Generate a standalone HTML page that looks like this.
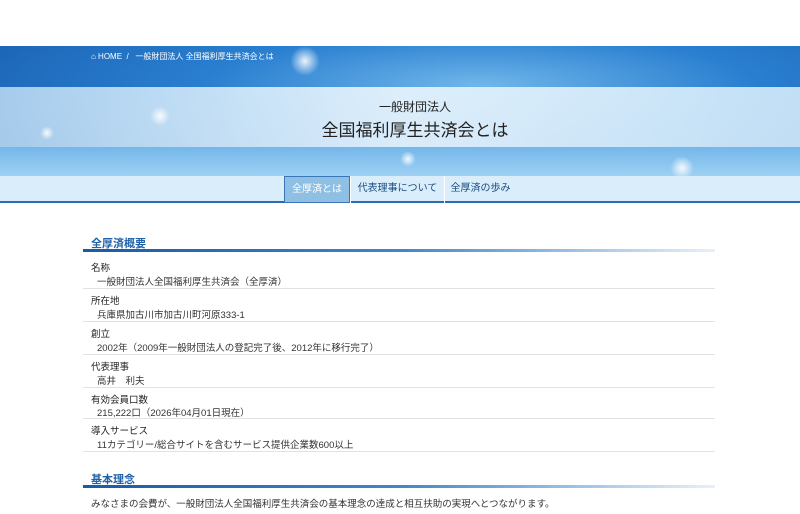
<!DOCTYPE html>
<html><head><meta charset="utf-8"><style>
*{margin:0;padding:0;box-sizing:border-box}
body{width:800px;height:514px;overflow:hidden;background:#fff;font-family:"Liberation Sans","Noto Sans CJK JP",sans-serif;color:#222}
.hero{position:absolute;top:46px;left:0;width:800px;height:130px;background:radial-gradient(ellipse at 60% 30%,#6fb6ea 0%,#2a7fd0 40%,#1556a8 100%);overflow:hidden}
.hero .band{position:absolute;top:41px;left:0;width:800px;height:60px;background:linear-gradient(90deg,rgba(200,228,248,.8),rgba(228,242,252,.95) 50%,rgba(210,234,250,.9))}
.hero .low{position:absolute;top:101px;left:0;width:800px;height:29px;background:linear-gradient(180deg,#74b7ea,#9ed0f3)}
.dot{position:absolute;border-radius:50%;background:radial-gradient(circle,rgba(255,255,255,.9),rgba(255,255,255,0) 70%)}
.bc{position:absolute;top:5px;left:91px;font-size:8px;color:#fff}
.t1{position:absolute;top:52px;left:0;width:800px;text-align:center;font-size:12px;color:#222;padding-left:30px}
.t2{position:absolute;top:70px;left:0;width:800px;text-align:center;font-size:17px;color:#222;padding-left:30px}
.nav{position:absolute;top:176px;left:0;width:800px;height:27px;background:#d9edfa;border-bottom:2px solid #2a6db4}
.nav div{position:absolute;top:0;height:27px;line-height:25px;font-size:10px;color:#1c4c80;text-align:center;border-left:1px solid #fff}
.nav .on{background:#8fc0e4;color:#fff;border:1px solid #3a76b8}
h2{position:absolute;left:91px;font-size:11px;color:#1f62a8;font-weight:bold}
.ul{position:absolute;left:83px;width:632px;height:3px;background:linear-gradient(90deg,#1a5aa8,#3f86cc 50%,#e8f0f8)}
.row{position:absolute;left:83px;width:632px;border-bottom:1px solid #e2e2e2;font-size:9.5px}
.row b{position:absolute;left:8px;top:4px;font-weight:normal;color:#222}
.row span{position:absolute;left:14px;top:18px;color:#333}
</style></head><body>
<div class="hero">
<div class="band"></div><div class="low"></div>
<div class="dot" style="left:290px;top:0;width:30px;height:30px"></div>
<div class="dot" style="left:150px;top:60px;width:20px;height:20px"></div>
<div class="dot" style="left:670px;top:110px;width:24px;height:24px"></div>
<div class="dot" style="left:400px;top:105px;width:16px;height:16px"></div>
<div class="dot" style="left:40px;top:80px;width:14px;height:14px"></div>
<div class="bc">⌂ HOME &nbsp;/ &nbsp; 一般財団法人 全国福利厚生共済会とは</div>
<div class="t1">一般財団法人</div>
<div class="t2">全国福利厚生共済会とは</div>
</div>
<div class="nav">
<div class="on" style="left:284px;width:66px">全厚済とは</div>
<div style="left:350px;width:94px">代表理事について</div>
<div style="left:444px;width:72px">全厚済の歩み</div>
</div>
<h2 style="top:235px">全厚済概要</h2>
<div class="ul" style="top:249px"></div>
<div class="row" style="top:256px;height:33px"><b>名称</b><span>一般財団法人全国福利厚生共済会（全厚済）</span></div>
<div class="row" style="top:289px;height:33px"><b>所在地</b><span>兵庫県加古川市加古川町河原333-1</span></div>
<div class="row" style="top:322px;height:33px"><b>創立</b><span>2002年（2009年一般財団法人の登記完了後、2012年に移行完了）</span></div>
<div class="row" style="top:355px;height:33px"><b>代表理事</b><span>高井　利夫</span></div>
<div class="row" style="top:388px;height:31px"><b>有効会員口数</b><span style="top:17px">215,222口（2026年04月01日現在）</span></div>
<div class="row" style="top:419px;height:33px"><b>導入サービス</b><span>11カテゴリー/総合サイトを含むサービス提供企業数600以上</span></div>
<h2 style="top:471px">基本理念</h2>
<div class="ul" style="top:485px"></div>
<div style="position:absolute;top:496px;left:91px;font-size:9.5px;color:#333">みなさまの会費が、一般財団法人全国福利厚生共済会の基本理念の達成と相互扶助の実現へとつながります。</div>
</body></html>
